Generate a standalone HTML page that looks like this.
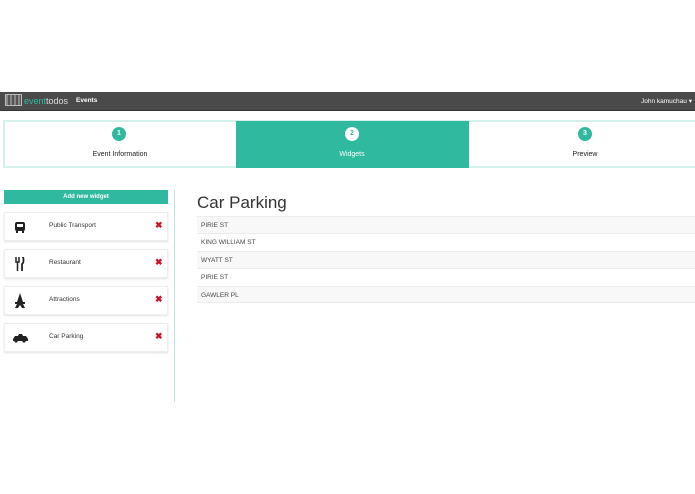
<!DOCTYPE html>
<html><head><style>
*{margin:0;padding:0;box-sizing:border-box}
body{width:695px;height:494px;background:#fff;font-family:"Liberation Sans",sans-serif;position:relative;overflow:hidden}
.a{position:absolute}
.nav{left:0;top:92px;width:695px;height:19px;background:#4a4a4a;border-bottom:1px solid #333}
.steps{left:3px;top:120px;width:700px;height:48px;border:2px solid #d3f0ea;background:#fff}
.circ{width:14px;height:14px;border-radius:50%;background:#2fb99e;color:#fff;font-size:7px;text-align:center;line-height:14px;font-weight:bold}
.lbl{font-size:7px;color:#222;text-align:center}
.card{left:4px;width:164px;height:29px;background:#fff;box-shadow:0 1px 2px rgba(0,0,0,.12);border:1px solid #eee}
.card span{position:absolute;left:44px;top:9px;font-size:6.5px;color:#333}
.card b{position:absolute;left:150px;top:7px;color:#d0112b;font-size:9px}
.row{left:197px;width:498px;height:17.4px;border-top:1px solid #ececec;font-size:6.5px;color:#444;padding:5px 0 0 4px}
</style></head><body>
<div class="a nav"></div>
<div class="a" style="left:5px;top:94px;width:17px;height:12px;border:1px solid #bbb;background:repeating-linear-gradient(90deg,#888 0 2px,#555 2px 4px)"></div>
<div class="a" style="left:24px;top:96px;font-size:9px;color:#ddd"><span style="color:#2fb99e">event</span>todos</div>
<div class="a" style="left:76px;top:97px;font-size:6.5px;color:#fff;font-weight:bold">Events</div>
<div class="a" style="left:641px;top:97px;font-size:6.5px;color:#fff">John kamuchau ▾</div>
<div class="a steps"></div>
<div class="a" style="left:236px;top:121px;width:233px;height:47px;background:#2fb99e"></div>
<div class="a circ" style="left:112px;top:127px">1</div>
<div class="a lbl" style="left:40px;top:151px;width:160px">Event Information</div>
<div class="a circ" style="left:345px;top:127px;background:#fff;color:#2fb99e">2</div>
<div class="a lbl" style="left:272px;top:151px;width:160px;color:#fff">Widgets</div>
<div class="a circ" style="left:578px;top:127px">3</div>
<div class="a lbl" style="left:505px;top:151px;width:160px">Preview</div>
<div class="a" style="left:4px;top:190px;width:164px;height:14px;background:#2fb99e;color:#fff;font-size:6px;font-weight:bold;text-align:center;line-height:14px">Add new widget</div>
<div class="a" style="left:174px;top:190px;width:1px;height:212px;background:#bfe9df"></div>
<div class="a card" style="top:212px"><svg class="a" style="left:9px;top:8px" width="12" height="12"><rect x="1" y="1" width="10" height="9" rx="2" fill="#222"/><rect x="3" y="3" width="6" height="3" fill="#fff"/><rect x="2" y="10" width="2" height="2" fill="#222"/><rect x="8" y="10" width="2" height="2" fill="#222"/></svg><span>Public Transport</span><b>✖</b></div>
<div class="a card" style="top:249px"><svg class="a" style="left:10px;top:7px" width="10" height="14"><path d="M1 0v5h3V0M2.5 5v9" stroke="#222" stroke-width="1.5" fill="none"/><path d="M7 0c2 0 2 6 0 7v7" stroke="#222" stroke-width="1.8" fill="none"/></svg><span>Restaurant</span><b>✖</b></div>
<div class="a card" style="top:286px"><svg class="a" style="left:9px;top:6px" width="12" height="15"><path d="M6 0L3 9H1v2h2l-2 4h3l2-3 2 3h3l-2-4h2V9H9z" fill="#222"/></svg><span>Attractions</span><b>✖</b></div>
<div class="a card" style="top:323px"><svg class="a" style="left:7px;top:9px" width="16" height="10"><path d="M1 6l2-3h3l1-2h3l1 2h3l2 3v2H1z" fill="#222"/><circle cx="4" cy="8" r="1.6" fill="#222"/><circle cx="12" cy="8" r="1.6" fill="#222"/></svg><span>Car Parking</span><b>✖</b></div>
<div class="a" style="left:197px;top:193px;font-size:17px;color:#333">Car Parking</div>
<div class="a row" style="top:216px;background:#f8f8f8">PIRIE ST</div>
<div class="a row" style="top:233.4px">KING WILLIAM ST</div>
<div class="a row" style="top:250.8px;background:#f8f8f8">WYATT ST</div>
<div class="a row" style="top:268.2px">PIRIE ST</div>
<div class="a row" style="top:285.6px;background:#f8f8f8;border-bottom:1px solid #ececec">GAWLER PL</div>
</body></html>
